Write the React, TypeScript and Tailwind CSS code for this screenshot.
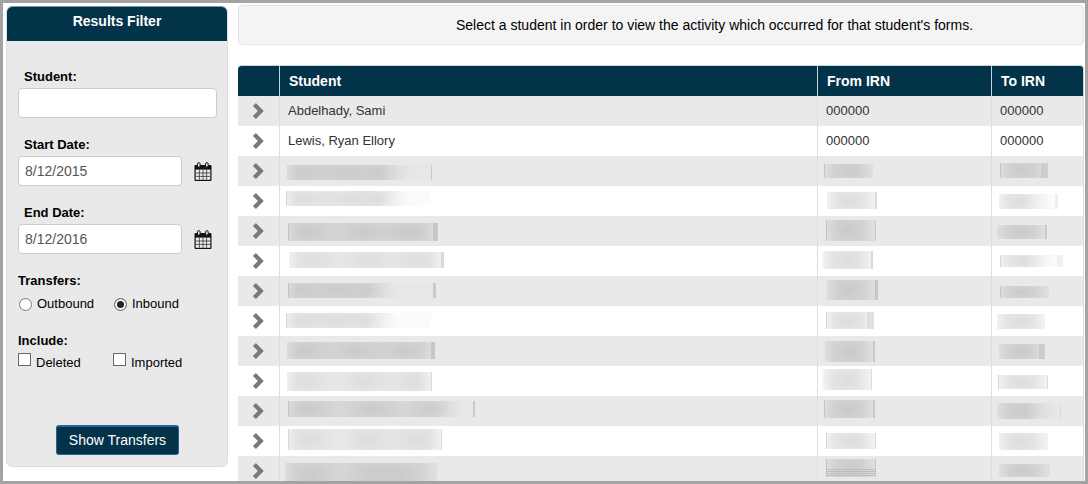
import React from 'react';

interface Smudge {
  x: number;
  y: number;
  w: number;
  h: number;
  left?: number;
  right?: number;
  // where the smear starts fading out, in px from its left side
  fade?: number;
  // centres of the darker spots
  spots: number[];
  stripes?: boolean;
}

interface Transfer {
  id: number;
  student: string | Smudge;
  from: string | Smudge;
  to: string | Smudge;
}

const TRANSFERS: Transfer[] = [
  { id: 1, student: 'Abdelhady, Sami', from: '000000', to: '000000' },
  { id: 2, student: 'Lewis, Ryan Ellory', from: '000000', to: '000000' },
  {
    id: 3,
    student: { x: 7, y: 9, w: 145, h: 15, right: 1, fade: 115, spots: [17, 58, 94] },
    from: { x: 6, y: 8, w: 49, h: 14, left: 1, spots: [26] },
    to: { x: 8, y: 7, w: 48, h: 15, left: 1, right: 7, spots: [22] },
  },
  {
    id: 4,
    student: { x: 6, y: 5, w: 145, h: 15, left: 1, fade: 115, spots: [18, 63, 94] },
    from: { x: 9, y: 6, w: 50, h: 17, right: 2, spots: [22] },
    to: { x: 7, y: 8, w: 59, h: 15, right: 3, fade: 46, spots: [22] },
  },
  {
    id: 5,
    student: { x: 8, y: 7, w: 150, h: 18, left: 1, right: 5, spots: [20, 75, 120] },
    from: { x: 8, y: 4, w: 50, h: 21, left: 1, right: 1, spots: [22] },
    to: { x: 5, y: 9, w: 50, h: 14, right: 2, spots: [24] },
  },
  {
    id: 6,
    student: { x: 9, y: 6, w: 155, h: 16, right: 3, spots: [25, 80, 128] },
    from: { x: 5, y: 5, w: 50, h: 18, right: 2, spots: [24] },
    to: { x: 8, y: 9, w: 63, h: 12, left: 1, right: 6, fade: 48, spots: [24] },
  },
  {
    id: 7,
    student: { x: 8, y: 7, w: 148, h: 15, left: 1, right: 3, fade: 100, spots: [12, 48, 82] },
    from: { x: 9, y: 4, w: 51, h: 20, right: 3, spots: [22] },
    to: { x: 8, y: 10, w: 49, h: 12, left: 1, spots: [22] },
  },
  {
    id: 8,
    student: { x: 6, y: 7, w: 145, h: 15, left: 1, fade: 102, spots: [16, 50, 84] },
    from: { x: 8, y: 6, w: 48, h: 17, left: 1, right: 7, spots: [22] },
    to: { x: 5, y: 8, w: 48, h: 15, spots: [24] },
  },
  {
    id: 9,
    student: { x: 7, y: 6, w: 148, h: 17, right: 4, spots: [18, 70, 118] },
    from: { x: 7, y: 5, w: 50, h: 21, right: 2, spots: [24] },
    to: { x: 7, y: 8, w: 46, h: 15, right: 6, spots: [22] },
  },
  {
    id: 10,
    student: { x: 7, y: 6, w: 145, h: 19, right: 1, spots: [18, 78, 128] },
    from: { x: 5, y: 3, w: 49, h: 21, right: 1, spots: [24] },
    to: { x: 6, y: 9, w: 50, h: 14, left: 1, right: 1, spots: [24] },
  },
  {
    id: 11,
    student: { x: 8, y: 5, w: 187, h: 16, left: 1, right: 2, fade: 166, spots: [18, 85, 148] },
    from: { x: 6, y: 4, w: 51, h: 18, left: 1, right: 2, spots: [24] },
    to: { x: 5, y: 7, w: 64, h: 16, right: 1, fade: 52, spots: [24] },
  },
  {
    id: 12,
    student: { x: 8, y: 3, w: 154, h: 21, left: 1, right: 1, spots: [20, 82, 130] },
    from: { x: 8, y: 7, w: 50, h: 16, left: 1, right: 1, spots: [24] },
    to: { x: 7, y: 7, w: 49, h: 17, spots: [22] },
  },
  {
    id: 13,
    student: { x: 5, y: 7, w: 152, h: 22, spots: [26, 88, 115] },
    from: { x: 8, y: 3, w: 50, h: 18, left: 1, right: 1, spots: [24], stripes: true },
    to: { x: 7, y: 8, w: 51, h: 13, spots: [24] },
  },
];

const SmudgedText: React.FC<{ smudge: Smudge; id: string; shaded: boolean }> = ({ smudge, id, shaded }) => {
  const { x, y, w, h, left = 0, right = 0, fade, spots, stripes } = smudge;
  const base = shaded ? '#d7d7d7' : '#e9e9e9';
  const dark = shaded ? '#cacaca' : '#dddddd';
  const page = shaded ? '#e9e9e9' : '#fdfdfd';
  const edge = shaded ? '#bdbdbd' : '#d0d0d0';
  const rx = w > 100 ? 34 : 26;

  return (
    <svg className="block" width={x + w} height="30" aria-hidden="true">
      <defs>
        <radialGradient id={`${id}-spot`}>
          <stop offset="0" stopColor={dark} />
          <stop offset="1" stopColor={dark} stopOpacity="0" />
        </radialGradient>
        <linearGradient id={`${id}-side`}>
          <stop offset="0" stopColor={page} stopOpacity="0.4" />
          <stop offset={10 / w} stopColor={page} stopOpacity="0" />
          <stop offset={fade ? (fade - 22) / w : 1 - 14 / w} stopColor={page} stopOpacity="0" />
          <stop offset={fade ? (fade + 8) / w : 1} stopColor={page} stopOpacity={fade ? 0.9 : 0.5} />
        </linearGradient>
      </defs>
      <svg x={x} y={y} width={w} height={h}>
        <rect width={w} height={h} fill={base} />
        {spots.map(s => (
          <ellipse key={s} cx={s} cy={h / 2} rx={rx} ry={h} fill={`url(#${id}-spot)`} />
        ))}
        <rect width={w} height={h} fill={`url(#${id}-side)`} />
        {stripes && [10, 12, 14, 16].map(s => <rect key={s} y={s} width={w} height="1" fill="#bdbdbd" />)}
        {left > 0 && <rect width={left} height={h} fill={edge} opacity="0.8" />}
        {right > 0 && (
          <rect x={w - right} width={right} height={h} fill={edge} opacity={fade && w < 100 ? 0.25 : right > 5 ? 0.5 : 0.7} />
        )}
      </svg>
    </svg>
  );
};

const CalendarIcon = () => (
  <svg width="18" height="19" viewBox="0 0 18 19" aria-hidden="true">
    <path d="M1.5 3h15a1 1 0 0 1 1 1v14a1 1 0 0 1-1 1h-15a1 1 0 0 1-1-1V4a1 1 0 0 1 1-1z" fill="#111" />
    <path d="M1.7 7.6h14.6v10.2H1.7z" fill="#ededed" />
    <path d="M5.4 7.6v10.2M9 7.6v10.2M12.6 7.6v10.2M1.7 11h14.6M1.7 14.4h14.6" stroke="#333" strokeWidth="0.8" fill="none" />
    <rect x="3.5" y="0.6" width="2.6" height="4.6" rx="1.3" fill="#e9e9e9" stroke="#111" />
    <rect x="11.6" y="0.6" width="2.6" height="4.6" rx="1.3" fill="#e9e9e9" stroke="#111" />
  </svg>
);

const ChevronIcon = () => (
  <svg width="11" height="16" viewBox="0 0 11 16" aria-hidden="true">
    <path d="M0.3 2.6L2.6 0.3Q3 0.1 3.4 0.5L10.3 7.5Q10.7 8 10.3 8.5L3.4 15.5Q3 15.9 2.6 15.7L0.3 13.4Q0 13 0.3 12.6L4.9 8L0.3 3.4Q0 3 0.3 2.6Z" fill="#797979" />
  </svg>
);

const DateField: React.FC<{ id: string; label: string; value: string }> = ({ id, label, value }) => (
  <div className="mt-4">
    <label htmlFor={id} className="block pl-1.5 font-bold leading-[22px]">{label}</label>
    <div className="flex items-center gap-3">
      <input
        id={id}
        type="text"
        defaultValue={value}
        className="h-[30px] min-w-0 flex-1 rounded border border-[#ccc] bg-white px-1.5 text-sm text-[#555]"
      />
      <button type="button" aria-label={`Pick ${label}`} className="mr-[5px] shrink-0">
        <CalendarIcon />
      </button>
    </div>
  </div>
);

const FilterPanel = () => (
  <aside className="w-[222px] shrink-0 self-start rounded-md border border-[#ddd] bg-[#e9e9e9]">
    <h2 className="-mt-px h-[35px] rounded-t-md border-t border-[#6f9dbf] bg-[#033349] text-center text-sm leading-7 font-bold text-white">
      Results Filter
    </h2>
    <form className="pt-[25px] pr-2.5 pb-[11px] pl-[11px]">
      <label htmlFor="student" className="block pl-1.5 font-bold leading-[22px]">Student:</label>
      <input
        id="student"
        type="text"
        className="block h-[30px] w-full rounded border border-[#ccc] bg-white px-1.5 text-sm text-[#555]"
      />
      <DateField id="start-date" label="Start Date:" value="8/12/2015" />
      <DateField id="end-date" label="End Date:" value="8/12/2016" />

      <fieldset className="mt-4">
        <legend className="font-bold leading-[22px]">Transfers:</legend>
        <div className="mt-0.5 flex leading-5">
          <label className="flex w-[95px] items-center gap-1">
            <input
              type="radio"
              name="direction"
              className="m-px size-[13px] appearance-none rounded-full border border-[#777] bg-white checked:bg-[#222] checked:shadow-[inset_0_0_0_2px_white]"
            />
            Outbound
          </label>
          <label className="flex items-center gap-1">
            <input
              type="radio"
              name="direction"
              defaultChecked
              className="m-px size-[13px] appearance-none rounded-full border border-[#777] bg-white checked:bg-[#222] checked:shadow-[inset_0_0_0_2px_white]"
            />
            Inbound
          </label>
        </div>
      </fieldset>

      <fieldset className="mt-4">
        <legend className="font-bold leading-[22px]">Include:</legend>
        <div className="flex leading-[22px]">
          <label className="flex w-[95px] gap-[5px]">
            <input type="checkbox" className="mt-px size-[13px] appearance-none border border-[#666] bg-white checked:bg-[#222]" />
            Deleted
          </label>
          <label className="flex gap-[5px]">
            <input type="checkbox" className="mt-px size-[13px] appearance-none border border-[#666] bg-white checked:bg-[#222]" />
            Imported
          </label>
        </div>
      </fieldset>

      <div className="mt-[51px] text-center">
        <button type="button" className="h-[30px] rounded-[3px] border border-t-2 border-[#2a6496] bg-[#033349] px-3 pb-0.5 text-sm leading-6 text-white">
          Show Transfers
        </button>
      </div>
    </form>
  </aside>
);

const TransferTable = () => (
  <table className="mt-5 w-full table-fixed border-separate border-spacing-0 text-left">
    <thead className="text-sm leading-5 text-white">
      <tr className="h-[31px]">
        <th className="w-[42px] rounded-tl border-t border-r border-[#c5d3dd] bg-[#033349]" aria-label="Expand"></th>
        <th className="border-t border-r border-[#c5d3dd] bg-[#033349] pl-[9px]">Student</th>
        <th className="w-[174px] border-t border-r border-[#c5d3dd] bg-[#033349] pl-[9px]">From IRN</th>
        <th className="w-[92px] rounded-tr border-t border-r border-[#c5d3dd] bg-[#033349] pl-[9px]">To IRN</th>
      </tr>
    </thead>
    <tbody className="text-[#333]">
      {TRANSFERS.map((t, i) => {
        const shaded = i % 2 === 0;
        return (
          <tr key={t.id} className={shaded ? 'h-[30px] bg-[#e9e9e9]' : 'h-[30px] bg-white'}>
            <td className="border-r border-[#ddd] p-0">
              <button type="button" aria-label="Show activity" className="ml-[15px] block">
                <ChevronIcon />
              </button>
            </td>
            {[t.student, t.from, t.to].map((value, col) => (
              <td key={col} className="border-r border-[#ddd] p-0">
                {typeof value === 'string' ? (
                  <span className="block pl-2 leading-[30px]">{value}</span>
                ) : (
                  <SmudgedText smudge={value} id={`s${t.id}-${col}`} shaded={shaded} />
                )}
              </td>
            ))}
          </tr>
        );
      })}
    </tbody>
  </table>
);

const App: React.FC = () => {
  return (
    <div className="flex h-screen gap-2.5 overflow-hidden border-3 border-[#a3a3a3] bg-white pt-[3px] pr-px pl-[3px] font-['Liberation_Sans',Arial,sans-serif] text-[13px] text-black">
      <FilterPanel />
      <main className="-mt-px min-w-0 flex-1">
        <p className="rounded border border-[#e3e3e3] bg-[#f4f4f4] px-2 py-[9px] pl-[217px] text-sm leading-5">
          Select a student in order to view the activity which occurred for that student's forms.
        </p>
        <TransferTable />
      </main>
    </div>
  );
};

export default App;
